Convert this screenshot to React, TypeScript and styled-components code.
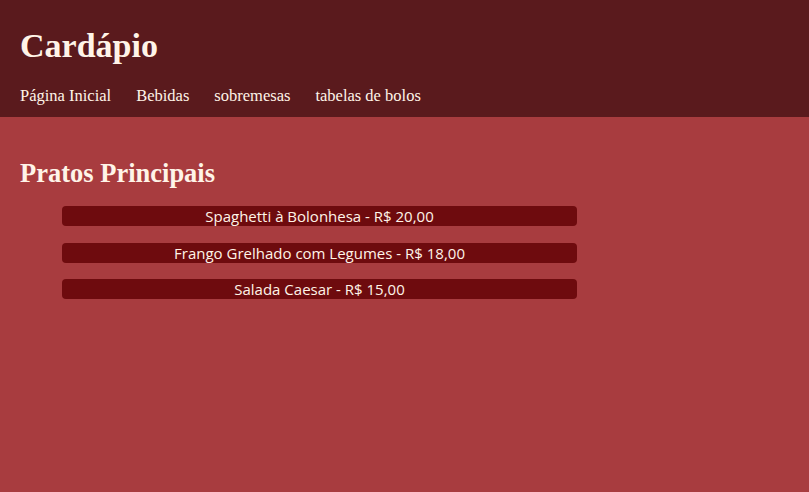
import React from "react";
import styled, { createGlobalStyle } from "styled-components";

const Global = createGlobalStyle`
  html, body { margin: 0; padding: 0; }
  body { background: #a83c3f; color: #fff4e8; font-family: "Liberation Serif", serif; }
`;

const Header = styled.header`
  background: #5a1a1d;
  padding: 27px 20px 12px;
  height: 117px;
  box-sizing: border-box;
`;

const Title = styled.h1`
  margin: 0;
  font-size: 34px;
  font-weight: bold;
  line-height: 38px;
  color: #fff4e8;
`;

const Nav = styled.nav`
  display: flex;
  gap: 25px;
  margin-top: 22px;
`;

const NavLink = styled.a`
  font-size: 16.5px;
  color: #fff4e8;
  text-decoration: none;
  line-height: 18px;
`;

const Main = styled.main`
  padding: 41px 20px;
`;

const Heading = styled.h2`
  margin: 0 0 18px;
  font-size: 26.5px;
  font-weight: bold;
  line-height: 30px;
`;

const List = styled.ul`
  list-style: none;
  margin: 0;
  padding: 0 0 0 42px;
  display: flex;
  flex-direction: column;
  gap: 16.5px;
  width: 515px;
`;

const Item = styled.li`
  background: #6e0b0e;
  border-radius: 4px;
  height: 20px;
  line-height: 20px;
  text-align: center;
  font-family: "Open Sans", "Noto Sans", sans-serif;
  font-size: 15px;
  color: #fff4e8;
`;

const items = [
  "Spaghetti à Bolonhesa - R$ 20,00",
  "Frango Grelhado com Legumes - R$ 18,00",
  "Salada Caesar - R$ 15,00",
];

export default function App() {
  return (
    <>
      <Global />
      <Header>
        <Title>Cardápio</Title>
        <Nav>
          <NavLink>Página Inicial</NavLink>
          <NavLink>Bebidas</NavLink>
          <NavLink>sobremesas</NavLink>
          <NavLink>tabelas de bolos</NavLink>
        </Nav>
      </Header>
      <Main>
        <Heading>Pratos Principais</Heading>
        <List>
          {items.map((t) => (
            <Item key={t}>{t}</Item>
          ))}
        </List>
      </Main>
    </>
  );
}
